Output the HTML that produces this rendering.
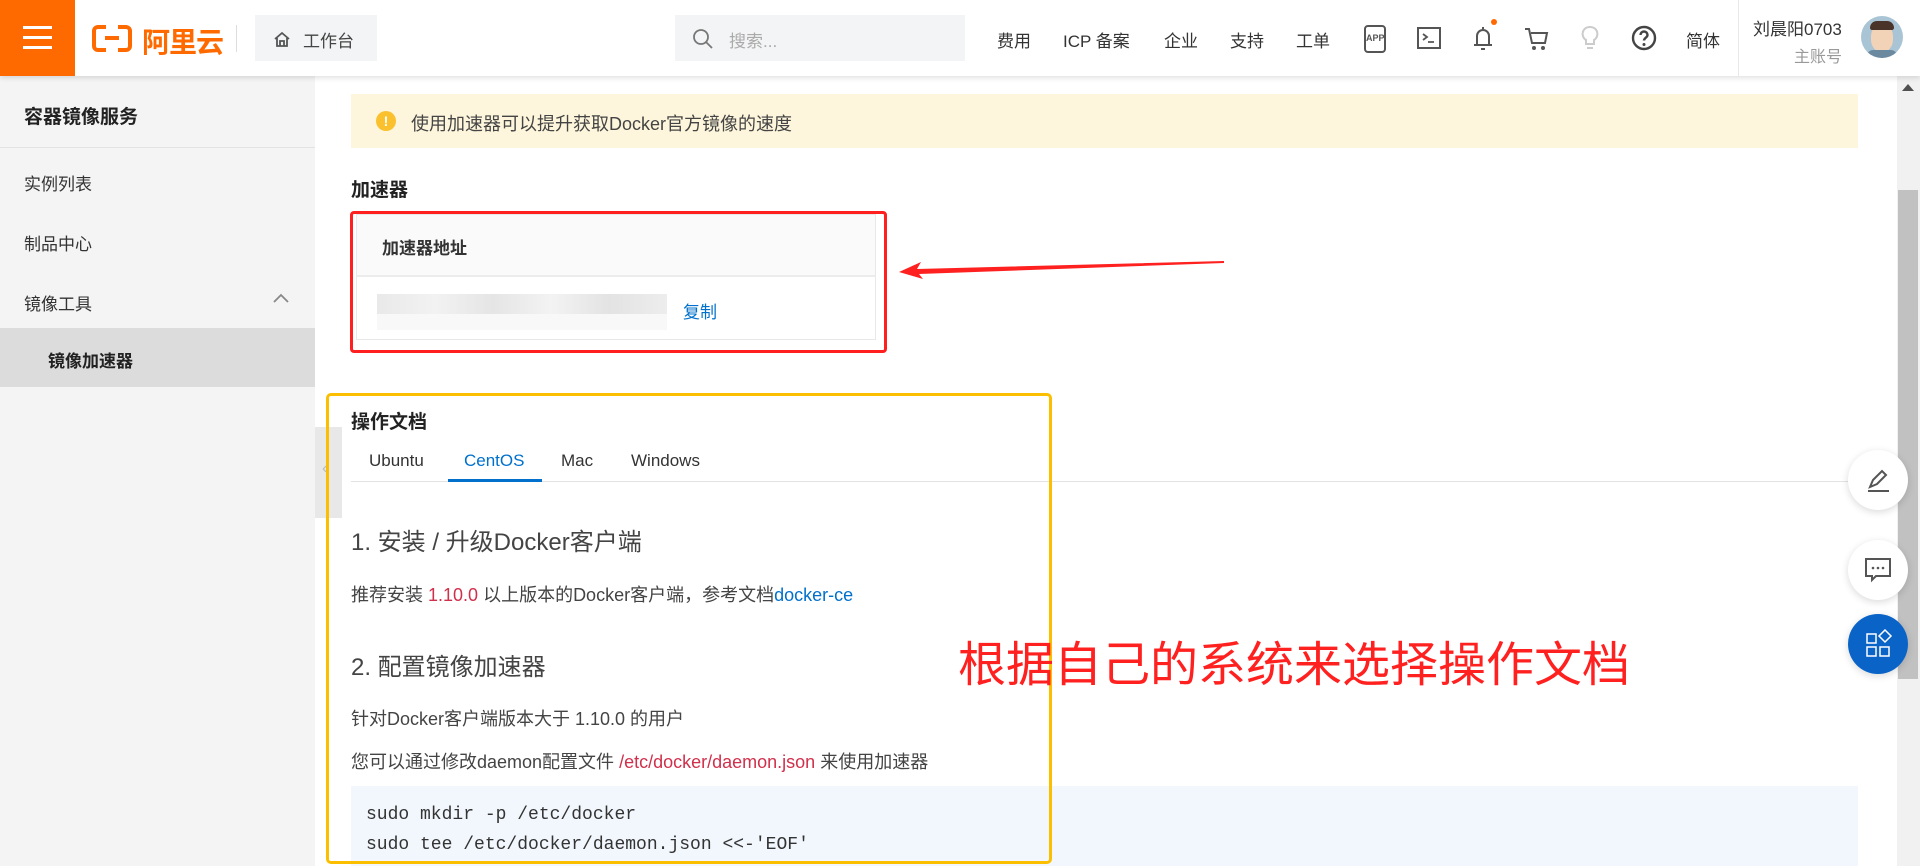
<!DOCTYPE html>
<html><head><meta charset="utf-8"><style>
*{margin:0;padding:0;box-sizing:border-box}
body{width:1920px;height:866px;overflow:hidden;background:#fff;font-family:"Liberation Sans","Noto Sans CJK SC",sans-serif;color:#333;position:relative}
.a{position:absolute;white-space:nowrap}
.hdr{position:absolute;left:0;top:0;width:1920px;height:76px;background:#fff;box-shadow:0 2px 5px rgba(0,0,0,.12);z-index:5}
.nav{font-size:17px;color:#333;top:27px}
.side{position:absolute;left:0;top:76px;width:315px;height:790px;background:#f4f4f4}
.si{font-size:17px;color:#333;left:24px}
.circ{position:absolute;width:60px;height:60px;border-radius:50%;background:#fff;box-shadow:0 2px 8px rgba(0,0,0,.15)}
</style></head><body>
<div class="hdr">
 <div class="a" style="left:0;top:0;width:75px;height:76px;background:#ff6a00">
  <div class="a" style="left:23px;top:26px;width:29px;height:3px;background:#fff"></div>
  <div class="a" style="left:23px;top:36px;width:29px;height:3px;background:#fff"></div>
  <div class="a" style="left:23px;top:46px;width:29px;height:3px;background:#fff"></div>
 </div>
 <div class="a" style="left:92px;top:25px;width:40px;height:27px;border:4px solid #ff6a00;border-radius:6px"></div>
 <div class="a" style="left:106px;top:21px;width:12px;height:34px;background:#fff"></div>
 <div class="a" style="left:105px;top:36px;width:14px;height:4px;background:#ff6a00"></div>
 <div class="a" style="left:142px;top:21px;font-size:28px;font-weight:bold;color:#ff6a00;letter-spacing:-1px">阿里云</div>
 <div class="a" style="left:236px;top:25px;width:1px;height:27px;background:#ddd"></div>
 <div class="a" style="left:255px;top:15px;width:122px;height:46px;background:#f3f4f5"></div>
 <svg class="a" style="left:273px;top:30px" width="18" height="18" viewBox="0 0 18 18"><path d="M2 9L9 3l7 6M4 8v8h10V8M7 16v-5h4v5" fill="none" stroke="#555" stroke-width="1.8"/></svg>
 <div class="a" style="left:303px;top:27px;font-size:17px;color:#444">工作台</div>
 <div class="a" style="left:675px;top:15px;width:290px;height:46px;background:#f3f4f5"></div>
 <svg class="a" style="left:692px;top:28px" width="22" height="22" viewBox="0 0 22 22"><circle cx="9" cy="9" r="7" fill="none" stroke="#777" stroke-width="1.8"/><path d="M14 14l6 6" stroke="#777" stroke-width="1.8"/></svg>
 <div class="a" style="left:729px;top:27px;font-size:17px;color:#aaa">搜索...</div>
 <div class="a nav" style="left:997px">费用</div>
 <div class="a nav" style="left:1063px">ICP 备案</div>
 <div class="a nav" style="left:1164px">企业</div>
 <div class="a nav" style="left:1230px">支持</div>
 <div class="a nav" style="left:1296px">工单</div>
 <div class="a" style="left:1364px;top:25px;width:22px;height:28px;border:2px solid #555;border-radius:4px;font-size:9px;font-weight:bold;color:#555;text-align:center;line-height:22px">APP</div>
 <svg class="a" style="left:1417px;top:27px" width="24" height="22" viewBox="0 0 24 22"><rect x="1" y="1" width="22" height="20" fill="none" stroke="#555" stroke-width="2"/><path d="M6 7l4 3-4 3M11 15h6" fill="none" stroke="#555" stroke-width="1.8"/></svg>
 <svg class="a" style="left:1471px;top:24px" width="24" height="28" viewBox="0 0 24 28"><path d="M12 3v2M6 20V12a6 6 0 0112 0v8M3 21h18M10 25h4" fill="none" stroke="#555" stroke-width="2"/></svg>
 <div class="a" style="left:1491px;top:19px;width:6px;height:6px;border-radius:50%;background:#ff6a00"></div>
 <svg class="a" style="left:1524px;top:26px" width="26" height="26" viewBox="0 0 26 26"><path d="M1 3h4l3 14h13l2-10H7" fill="none" stroke="#555" stroke-width="2"/><circle cx="10" cy="22" r="2" fill="#555"/><circle cx="19" cy="22" r="2" fill="#555"/></svg>
 <svg class="a" style="left:1580px;top:25px" width="20" height="28" viewBox="0 0 20 28"><path d="M10 2a7 7 0 00-4 13v4h8v-4a7 7 0 00-4-13zM7 23h6" fill="none" stroke="#ccc" stroke-width="2"/></svg>
 <svg class="a" style="left:1631px;top:25px" width="26" height="26" viewBox="0 0 26 26"><circle cx="13" cy="13" r="11" fill="none" stroke="#444" stroke-width="2.4"/><path d="M9.5 10a3.5 3.5 0 117 0c0 2.5-3.5 3-3.5 5.5" fill="none" stroke="#444" stroke-width="2.4"/><circle cx="13" cy="19.5" r="1.5" fill="#444"/></svg>
 <div class="a nav" style="left:1686px">简体</div>
 <div class="a" style="left:1738px;top:0;width:1px;height:76px;background:#e8e8e8"></div>
 <div class="a" style="left:1753px;top:15px;font-size:17px;color:#333">刘晨阳0703</div>
 <div class="a" style="left:1794px;top:43px;font-size:16px;color:#999">主账号</div>
 <div class="a" style="left:1861px;top:16px;width:42px;height:42px;border-radius:50%;background:#a9c4d4;overflow:hidden">
  <div class="a" style="left:10px;top:8px;width:22px;height:28px;border-radius:45%;background:#f3d3b8"></div>
  <div class="a" style="left:9px;top:5px;width:24px;height:9px;border-radius:10px 10px 3px 3px;background:#4a3328"></div>
  <div class="a" style="left:6px;top:34px;width:30px;height:12px;border-radius:8px;background:#6b8aa0"></div>
 </div>
</div>

<div class="side">
 <div class="a" style="left:24px;top:26px;font-size:19px;font-weight:bold;color:#222">容器镜像服务</div>
 <div class="a" style="left:0;top:71px;width:315px;height:1px;background:#e3e3e3"></div>
 <div class="a si" style="top:94px">实例列表</div>
 <div class="a si" style="top:154px">制品中心</div>
 <div class="a si" style="top:214px">镜像工具</div>
 <svg class="a" style="left:272px;top:216px" width="18" height="12" viewBox="0 0 18 12"><path d="M2 10l7-7 7 7" fill="none" stroke="#888" stroke-width="1.8"/></svg>
 <div class="a" style="left:0;top:252px;width:315px;height:59px;background:#dcdcdc"></div>
 <div class="a" style="left:48px;top:271px;font-size:17px;font-weight:bold;color:#222">镜像加速器</div>
</div>
<div class="a" style="left:315px;top:427px;width:27px;height:91px;background:#e8e8e8"></div>
<div class="a" style="left:322px;top:460px;font-size:16px;color:#bbb">‹</div>

<div class="a" style="left:351px;top:94px;width:1507px;height:54px;background:#fdf6dc"></div>
<div class="a" style="left:376px;top:111px;width:20px;height:20px;border-radius:50%;background:#fbc02d;color:#fff;font-size:14px;font-weight:bold;text-align:center;line-height:20px">!</div>
<div class="a" style="left:411px;top:110px;font-size:18px;color:#444">使用加速器可以提升获取Docker官方镜像的速度</div>

<div class="a" style="left:351px;top:175px;font-size:19px;font-weight:bold;color:#222">加速器</div>
<div class="a" style="left:356px;top:214px;width:520px;height:126px;border:1px solid #e8e8e8"></div>
<div class="a" style="left:357px;top:215px;width:518px;height:62px;background:#fafafa;border-bottom:2px solid #ececec"></div>
<div class="a" style="left:382px;top:234px;font-size:17px;font-weight:bold;color:#333">加速器地址</div>
<div class="a" style="left:377px;top:294px;width:290px;height:20px;background:linear-gradient(90deg,#e9e9e9,#f2f2f2 20%,#e5e5e5 40%,#f3f3f3 60%,#e3e3e3 80%,#ededed)"></div>
<div class="a" style="left:377px;top:314px;width:290px;height:16px;background:#f8f8f8"></div>
<div class="a" style="left:683px;top:298px;font-size:17px;color:#0070cc">复制</div>
<div class="a" style="left:350px;top:211px;width:537px;height:142px;border:3px solid #ff1f1f;border-radius:4px"></div>
<svg class="a" style="left:895px;top:255px" width="335" height="26" viewBox="0 0 335 26"><path d="M329 6L22 14 26 7 4 17 28 24 24 19 329 8z" fill="#ff2020"/></svg>

<div class="a" style="left:351px;top:407px;font-size:19px;font-weight:bold;color:#222">操作文档</div>
<div class="a" style="left:351px;top:481px;width:1507px;height:1px;background:#e3e3e3"></div>
<div class="a" style="left:369px;top:451px;font-size:17px;color:#333">Ubuntu</div>
<div class="a" style="left:464px;top:451px;font-size:17px;color:#0070cc">CentOS</div>
<div class="a" style="left:448px;top:479px;width:94px;height:3px;background:#0070cc"></div>
<div class="a" style="left:561px;top:451px;font-size:17px;color:#333">Mac</div>
<div class="a" style="left:631px;top:451px;font-size:17px;color:#333">Windows</div>
<div class="a" style="left:351px;top:522px;font-size:24px;color:#444">1. 安装 / 升级Docker客户端</div>
<div class="a" style="left:351px;top:581px;font-size:18px;color:#444">推荐安装 <span style="color:#d0304b">1.10.0</span> 以上版本的Docker客户端，参考文档<span style="color:#0070cc">docker-ce</span></div>
<div class="a" style="left:351px;top:647px;font-size:24px;color:#444">2. 配置镜像加速器</div>
<div class="a" style="left:351px;top:705px;font-size:18px;color:#444">针对Docker客户端版本大于 1.10.0 的用户</div>
<div class="a" style="left:351px;top:748px;font-size:18px;color:#444">您可以通过修改daemon配置文件 <span style="color:#d0304b">/etc/docker/daemon.json</span> 来使用加速器</div>
<div class="a" style="left:351px;top:786px;width:1507px;height:80px;background:#f2f7fd"></div>
<div class="a" style="left:366px;top:800px;font-family:'Liberation Mono',monospace;font-size:18px;color:#333;line-height:30px">sudo mkdir -p /etc/docker<br>sudo tee /etc/docker/daemon.json &lt;&lt;-'EOF'</div>
<div class="a" style="left:326px;top:393px;width:726px;height:471px;border:3px solid #fbbf00;border-radius:5px"></div>
<div class="a" style="left:958px;top:625px;font-size:48px;color:#ff2020">根据自己的系统来选择操作文档</div>

<div class="a" style="left:1897px;top:76px;width:23px;height:790px;background:#f1f1f1"></div>
<div class="a" style="left:1902px;top:84px;width:0;height:0;border-left:6px solid transparent;border-right:6px solid transparent;border-bottom:7px solid #505050"></div>
<div class="a" style="left:1898px;top:190px;width:20px;height:489px;background:#c1c1c1"></div>

<div class="circ" style="left:1848px;top:450px"></div>
<svg class="a" style="left:1863px;top:465px" width="30" height="30" viewBox="0 0 30 30"><path d="M7 22l3-7 9-9 4 4-9 9-7 3zM5 26h21" fill="none" stroke="#555" stroke-width="2"/></svg>
<div class="circ" style="left:1848px;top:540px"></div>
<svg class="a" style="left:1863px;top:556px" width="30" height="28" viewBox="0 0 30 28"><path d="M3 3h24v17H13l-4 4v-4H3z" fill="none" stroke="#555" stroke-width="2"/><circle cx="10" cy="12" r="1.3" fill="#555"/><circle cx="15" cy="12" r="1.3" fill="#555"/><circle cx="20" cy="12" r="1.3" fill="#555"/></svg>
<div class="circ" style="left:1848px;top:614px;background:#0a64c8"></div>
<svg class="a" style="left:1864px;top:629px" width="30" height="30" viewBox="0 0 30 30"><rect x="3" y="5" width="9" height="9" fill="none" stroke="#fff" stroke-width="1.5"/><rect x="3" y="18" width="9" height="9" fill="none" stroke="#fff" stroke-width="1.5"/><rect x="16" y="18" width="9" height="9" fill="none" stroke="#fff" stroke-width="1.5"/><path d="M21 1l6 6-6 6-6-6z" fill="none" stroke="#fff" stroke-width="1.5"/></svg>
</body></html>
